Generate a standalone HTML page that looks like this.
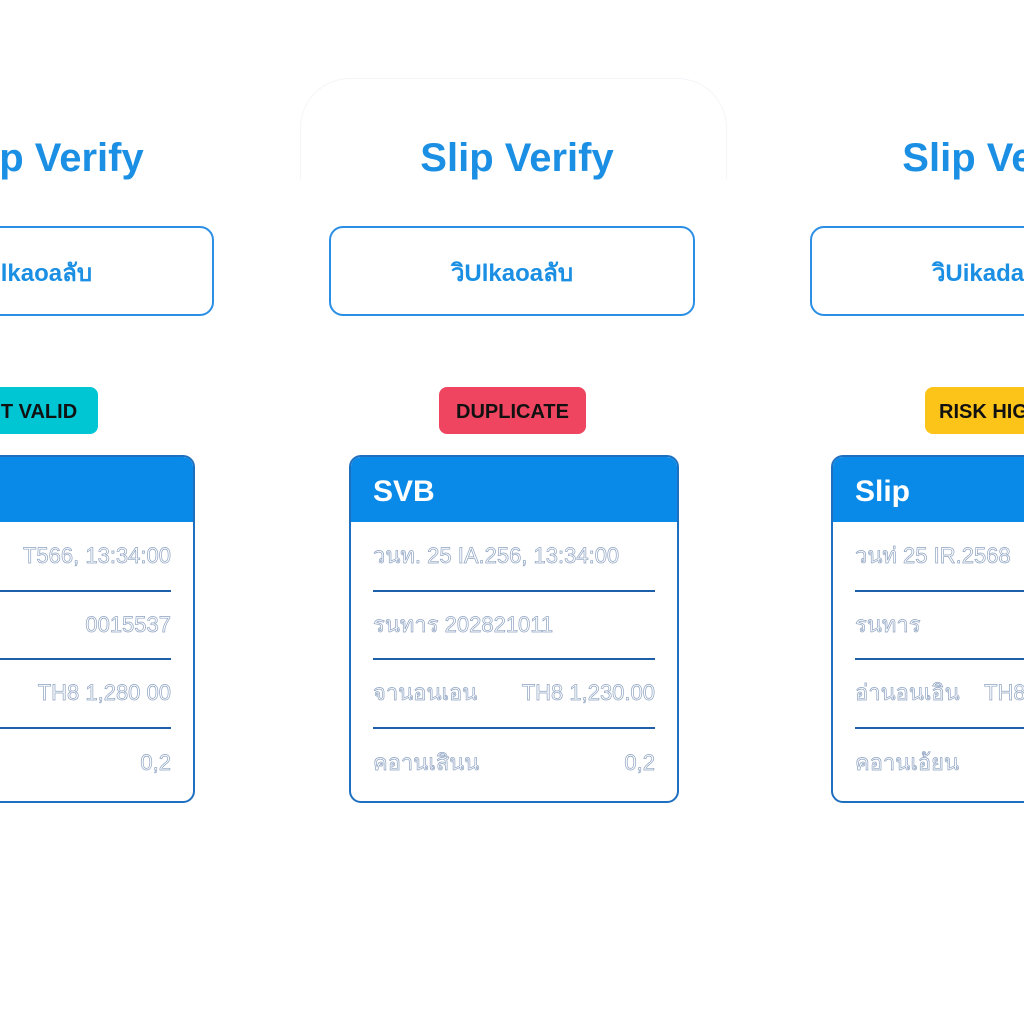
<!DOCTYPE html>
<html><head><meta charset="utf-8"><style>
html,body{margin:0;width:1024px;height:1024px;overflow:hidden}
body{background:#fff;position:relative;font-family:"Liberation Sans","Noto Sans CJK SC",sans-serif}
#w{position:absolute;left:0;top:0;width:1024px;height:1024px;overflow:hidden}
.a{position:absolute}
.title{font-size:40px;font-weight:bold;color:#1a8fe3;width:400px;text-align:center;top:136px}
.btn{border:2px solid #2b8fe6;border-radius:14px;height:90px;width:366px;top:226px;box-sizing:border-box;display:flex;align-items:center;justify-content:center;font-size:24px;font-weight:bold;color:#1a8fe3;padding-top:2px}
.badge{top:387px;height:47px;border-radius:8px;display:flex;align-items:center;justify-content:center;font-size:20px;font-weight:bold;color:#111;padding-top:4px;box-sizing:border-box}
.card{top:455px;width:330px;height:348px;border:2px solid #1f6fc0;border-radius:12px;box-sizing:border-box;overflow:hidden}
.hd{height:65px;background:#0a8ae8;color:#fff;font-size:30px;font-weight:bold;padding-left:22px;line-height:70px}
.row{position:absolute;left:22px;right:22px;font-size:22px;line-height:26px;color:transparent;-webkit-text-stroke:0.7px #8ea3c2;display:flex;justify-content:space-between}
.ln{position:absolute;left:22px;right:22px;height:2px;background:#1d5fa8}
</style></head><body><div id="w">
<div class="a" style="left:300px;top:78px;width:425px;height:100px;border:1px solid #f3f5f8;border-bottom:none;border-radius:50px 50px 0 0"></div>

<div class="a title" style="left:-153px">Slip Verify</div>
<div class="a title" style="left:317px">Slip Verify</div>
<div class="a title" style="left:799px">Slip Verify</div>

<div class="a btn" style="left:-152px">วิUlkaoaลับ</div>
<div class="a btn" style="left:329px">วิUlkaoaลับ</div>
<div class="a btn" style="left:810px">วิUikadaลับ</div>

<div class="a badge" style="left:-50px;width:148px;background:#00c6d4">NOT VALID</div>
<div class="a badge" style="left:439px;width:147px;background:#ef4560">DUPLICATE</div>
<div class="a badge" style="left:925px;width:150px;background:#fcc419;justify-content:flex-start;padding-left:14px">RISK HIGH</div>

<div class="a card" style="left:-135px"><div class="hd">SVB</div>
<div class="row" style="top:86px"><span></span><span>T566, 13:34:00</span></div><div class="ln" style="top:133px"></div>
<div class="row" style="top:155px"><span></span><span>0015537</span></div><div class="ln" style="top:201px"></div>
<div class="row" style="top:223px"><span></span><span>TH8 1,280 00</span></div><div class="ln" style="top:270px"></div>
<div class="row" style="top:293px"><span>ความเสี่ยง</span><span>0,2</span></div></div>

<div class="a card" style="left:349px"><div class="hd">SVB</div>
<div class="row" style="top:86px"><span>วนท. 25 IA.256, 13:34:00</span></div><div class="ln" style="top:133px"></div>
<div class="row" style="top:155px"><span>รนทาร 202821011</span></div><div class="ln" style="top:201px"></div>
<div class="row" style="top:223px"><span>จานอนเอน</span><span>TH8 1,230.00</span></div><div class="ln" style="top:270px"></div>
<div class="row" style="top:293px"><span>คอานเสินน</span><span>0,2</span></div></div>

<div class="a card" style="left:831px"><div class="hd">Slip</div>
<div class="row" style="top:86px"><span>วนท่ 25 IR.2568</span></div><div class="ln" style="top:133px"></div>
<div class="row" style="top:155px"><span>รนทาร</span></div><div class="ln" style="top:201px"></div>
<div class="row" style="top:223px"><span>อ่านอนเอิน&nbsp;&nbsp;&nbsp;&nbsp;TH8</span></div><div class="ln" style="top:270px"></div>
<div class="row" style="top:293px"><span>คอานเอ้ยน</span></div></div>
</div></body></html>
